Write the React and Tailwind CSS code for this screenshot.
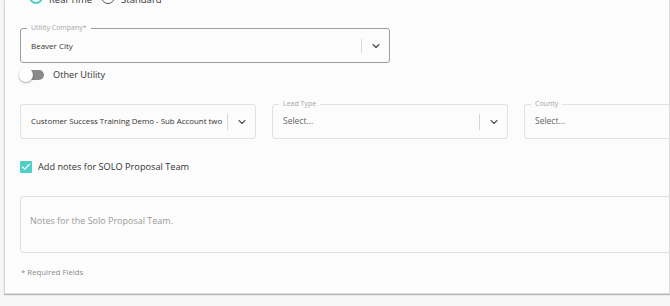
import { ChevronDown, Check } from 'lucide-react';

function SelectField({ label, value, width, muted, bold }) {
  return (
    <div
      className="relative h-[35px] shrink-0 rounded-[3px] border border-[#e2e2e2] bg-[#fcfcfc] flex items-center"
      style={{ width }}
    >
      {label && (
        <span className="absolute -top-[6px] left-[6px] bg-[#fcfcfc] px-[4px] text-[7px] leading-[10px] text-[#a5a5a5]">
          {label}
        </span>
      )}
      <span
        className={`flex-1 pl-[10px] whitespace-nowrap overflow-hidden ${bold ? 'text-[7.9px] font-medium text-[#333]' : 'text-[8.5px]'} ${muted ? 'text-[#666]' : ''}`}
      >
        {value}
      </span>
      <div className="h-[16px] w-px bg-[#d6d6d6]" />
      <div className="w-[27px] flex justify-center">
        <ChevronDown size={12} strokeWidth={2.2} className="text-[#555]" />
      </div>
    </div>
  );
}

export default function App() {
  return (
    <div className="w-[670px] h-[306px] bg-[#f6f6f6] overflow-hidden" style={{ fontFamily: '"Open Sans", "Noto Sans", sans-serif' }}>
      <div className="ml-[4px] h-[294px] w-[666px] overflow-hidden border-x border-b border-[#d9d9d9] bg-[#fcfcfc] shadow-[0_1px_1px_rgba(0,0,0,0.25)] pl-[15px]">
        {/* delivery type radios */}
        <div className="-mt-[10px] flex items-start h-[14px]">
          <div className="ml-[9px] h-[14px] w-[14px] shrink-0 rounded-full border-2 border-[#4fcfc6] flex items-center justify-center">
            <div className="h-[6px] w-[6px] rounded-full bg-[#4fcfc6]" />
          </div>
          <span className="ml-[6px] text-[9.5px] leading-[20px] text-[#333]">Real Time</span>
          <div className="ml-[9px] h-[14px] w-[14px] shrink-0 rounded-full border-[1.5px] border-[#555]" />
          <span className="ml-[6px] text-[9.5px] leading-[20px] text-[#333]">Standard</span>
        </div>

        {/* utility company */}
        <div className="relative mt-[24px] h-[35px] w-[370px] rounded-[3px] border border-[#9c9c9c] flex items-center">
          <span className="absolute -top-[6px] left-[6px] bg-[#fcfcfc] px-[4px] text-[7px] leading-[10px] text-[#a8a8a8]">
            Utility Company*
          </span>
          <span className="flex-1 pl-[10px] text-[8px] font-medium text-[#333]">Beaver City</span>
          <div className="h-[14px] w-px bg-[#d8d8d8]" />
          <div className="w-[27px] flex justify-center">
            <ChevronDown size={12} strokeWidth={2.2} className="text-[#444]" />
          </div>
        </div>

        {/* other utility toggle */}
        <div className="mt-[6px] flex items-center h-[12px]">
          <div className="relative h-[10px] w-[24px] rounded-full bg-[#8a8a8a]">
            <div className="absolute -left-[1px] -top-[2px] h-[14px] w-[14px] rounded-full bg-white shadow-[0_1px_2px_rgba(0,0,0,0.35)]" />
          </div>
          <span className="ml-[9px] text-[9.2px] text-[#333]">Other Utility</span>
        </div>

        {/* selects row */}
        <div className="mt-[23px] flex gap-[16px]">
          <SelectField width={236} value="Customer Success Training Demo - Sub Account two" bold />
          <SelectField width={236} label="Lead Type" value="Select..." muted />
          <SelectField width={236} label="County" value="Select..." muted />
        </div>

        {/* notes checkbox */}
        <div className="mt-[22px] flex items-center h-[12px]">
          <div className="h-[12px] w-[12px] rounded-[1px] bg-[#4fcfc6] flex items-center justify-center">
            <Check size={10} strokeWidth={3} className="text-white" />
          </div>
          <span className="ml-[6px] text-[9.2px] text-[#333]">Add notes for SOLO Proposal Team</span>
        </div>

        <div className="mt-[23px] h-[57px] w-[760px] rounded-[3px] border border-[#e0e0e0] pl-[9px] pt-[9px]">
          <span className="text-[9px] text-[#9a9a9a]">Notes for the Solo Proposal Team.</span>
        </div>

        <div className="mt-[14px] pl-[1px] text-[7.8px] text-[#8a8a8a]">* Required Fields</div>
      </div>
    </div>
  );
}
